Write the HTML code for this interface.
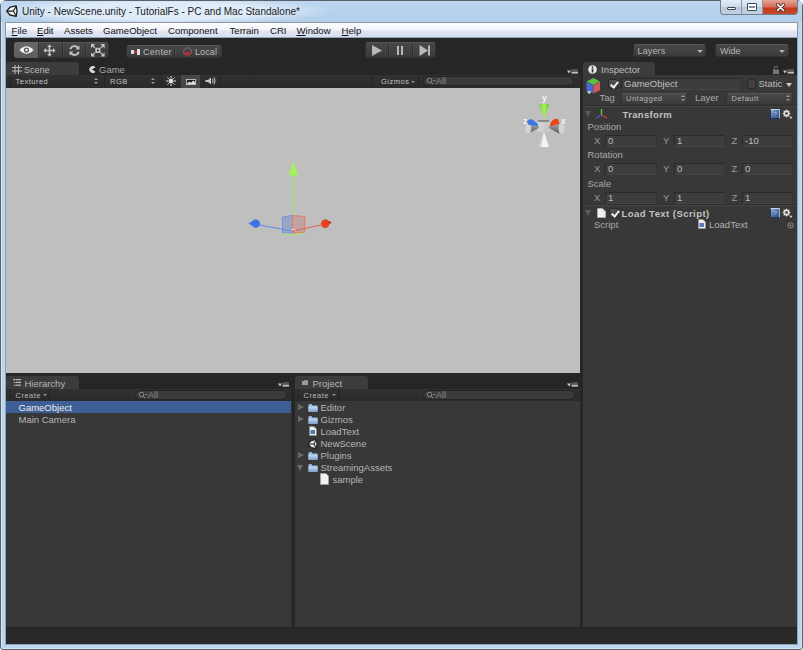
<!DOCTYPE html>
<html><head><meta charset="utf-8">
<style>
*{margin:0;padding:0;box-sizing:border-box}
html,body{width:803px;height:650px;overflow:hidden;background:#fff}
body{position:relative;font-family:"Liberation Sans",sans-serif;font-size:10px}
.a{position:absolute}
.t{position:absolute;white-space:pre;line-height:1}
/* window frame */
#frame{left:0;top:0;width:803px;height:650px;background:#bcd5ee;border:1px solid #59626c;border-radius:6px 6px 3px 3px;box-shadow:inset 1px 1px 0 #d6e6f5,inset -1px -1px 0 #d6e6f5}
#menubar{left:5px;top:22px;width:793px;height:16px;background:linear-gradient(#fdfdff,#f2f4fa 45%,#e0e4f3 55%,#d9def0);border:1px solid #8d97a6;border-bottom:none}
#app{left:6px;top:38px;width:791px;height:606px;background:#262626;box-shadow:0 0 0 1px #8ea4ba}
.tab{background:#3c3c3c;border-radius:3px 3px 0 0}
.tbar{background:#2e2e2e}
.btn{background:linear-gradient(#484848,#3b3b3b);border:1px solid #333;border-top-color:#565656;border-radius:3px}
.sep{position:absolute;top:0;width:1px;height:14px;background:#2e2e2e;box-shadow:1px 0 0 rgba(255,255,255,.05)}
.arr{position:absolute;width:0;height:0;border-left:3px solid transparent;border-right:3px solid transparent;border-top:3px solid #b0b0b0}
.ud{position:absolute;width:4px;height:7px;background:linear-gradient(#9a9a9a,#9a9a9a) top/4px 0 no-repeat}
.ud:before{content:"";position:absolute;left:0;top:0;border-left:2px solid transparent;border-right:2px solid transparent;border-bottom:2.5px solid #9c9c9c}
.ud:after{content:"";position:absolute;left:0;top:4px;border-left:2px solid transparent;border-right:2px solid transparent;border-top:2.5px solid #9c9c9c}
.chk{position:absolute;width:10px;height:10px;border-radius:2px;background:linear-gradient(#505050,#444);border:1px solid #2a2a2a}
.chk:after{content:"";position:absolute;left:2.6px;top:0px;width:2.8px;height:6px;border:solid #f0f0f0;border-width:0 2.1px 2.1px 0;transform:rotate(40deg)}
.fld{background:#3d3d3d;border:1px solid #2a2a2a;border-bottom-color:#454545;border-right-color:#353535;border-radius:1px}
.fo{position:absolute;border-left:3.5px solid transparent;border-right:3.5px solid transparent;border-top:6px solid #5c5c5c}
.hb{position:absolute;width:10px;height:10px;border-radius:1px;background:linear-gradient(135deg,#9db7da,#4d72a8 50%,#34568a);border:1px solid #1f3358;border-top-color:#c0d2ea;border-right-color:#9fb4d2}
.hb:after{content:"?";position:absolute;left:2.5px;top:1px;font:bold 6px "Liberation Sans",sans-serif;color:#9cb3d6}
.panel{background:#383838}
.lt{color:#c8c8c8}
</style></head><body>
<div id="frame" class="a"></div>
<div id="menubar" class="a"></div>
<div id="app" class="a"></div>
<!-- title -->
<div class="a" style="left:1px;top:1px;width:801px;height:21px;background:linear-gradient(#bdd5ee,#b3cfea)"></div>
<div class="a" style="left:0px;top:1px;width:330px;height:21px;background:radial-gradient(ellipse 175px 14px at 160px 10px,rgba(225,237,249,.95) 60%,rgba(225,237,249,0) 100%)"></div>
<svg class="a" style="left:5px;top:4px" width="14" height="14" viewBox="0 0 14 14"><path d="M1.6 7.1 L5 3.2 L11.2 1.8 L12 7.1 L11.2 12.4 L5 11 Z" fill="#f6f6f6" stroke="#1e1e1e" stroke-width="1.3" stroke-linejoin="round"/><path d="M2 7.1 H8.4 L11 2.4 M8.4 7.1 L11 11.8" stroke="#1e1e1e" stroke-width="1.1" fill="none"/></svg>
<div class="t" style="left:22px;top:7px;color:#1b1b1b;font-size:10px">Unity - NewScene.unity - TutorialFs - PC and Mac Standalone*</div>
<!-- window buttons -->
<div class="a" style="left:720px;top:0;width:78px;height:15px;border:1px solid #6d7f96;border-top:none;border-radius:0 0 4px 4px;overflow:hidden;background:linear-gradient(#e3ebf5,#d0dcea 45%,#b9c9dc 55%,#c3d2e3)">
 <div class="a" style="left:20px;top:0;width:1px;height:15px;background:#8596ad"></div>
 <div class="a" style="left:41px;top:0;width:1px;height:15px;background:#8596ad"></div>
 <div class="a" style="left:42px;top:0;width:35px;height:15px;background:linear-gradient(#e6a596,#d56c58 45%,#c4391f 55%,#c84a2a)"></div>
 <div class="a" style="left:6px;top:7px;width:9px;height:3px;background:#fff;border:1px solid #3c4452;border-radius:1px"></div>
 <div class="a" style="left:26px;top:3px;width:10px;height:8px;background:#fff;border:1px solid #3c4452;border-radius:1px"><div class="a" style="left:1px;top:2px;width:6px;height:2px;background:#8090a0"></div></div>
 <svg class="a" style="left:55px;top:3px" width="9" height="9" viewBox="0 0 9 9"><path d="M1.5 1.5 L7.5 7.5 M7.5 1.5 L1.5 7.5" stroke="#4a2e28" stroke-width="3.2" stroke-linecap="round"/><path d="M1.5 1.5 L7.5 7.5 M7.5 1.5 L1.5 7.5" stroke="#fff" stroke-width="1.7" stroke-linecap="round"/></svg>
</div>
<!-- menu -->
<div class="t" style="left:11.5px;top:25.5px;color:#111;font-size:9.6px"><u>F</u>ile</div>
<div class="t" style="left:37px;top:25.5px;color:#111;font-size:9.6px"><u>E</u>dit</div>
<div class="t" style="left:64px;top:25.5px;color:#111;font-size:9.6px">Assets</div>
<div class="t" style="left:103px;top:25.5px;color:#111;font-size:9.6px">GameObject</div>
<div class="t" style="left:168px;top:25.5px;color:#111;font-size:9.6px">Component</div>
<div class="t" style="left:229.5px;top:25.5px;color:#111;font-size:9.6px">Terrain</div>
<div class="t" style="left:270px;top:25.5px;color:#111;font-size:9.6px">CRI</div>
<div class="t" style="left:296.5px;top:25.5px;color:#111;font-size:9.6px"><u>W</u>indow</div>
<div class="t" style="left:341.5px;top:25.5px;color:#111;font-size:9.6px"><u>H</u>elp</div>



<!-- toolbar -->
<div class="a btn" style="left:14px;top:42px;width:95px;height:16px">
 <div class="a" style="left:-1px;top:-1px;width:24px;height:16px;background:linear-gradient(#6a6a6a,#5c5c5c);border-radius:3px 0 0 3px"></div>
 <div class="a sep" style="left:23px"></div><div class="a sep" style="left:47px"></div><div class="a sep" style="left:70px"></div>
 <svg class="a" style="left:3.5px;top:2px" width="15" height="10" viewBox="0 0 15 10"><path d="M0.5 5 Q7.5 -2.5 14.5 5 Q7.5 12.5 0.5 5Z" fill="#f2f2f2"/><circle cx="7.5" cy="5" r="2.6" fill="#555"/><circle cx="7.5" cy="5" r="1.3" fill="#eee"/></svg>
 <svg class="a" style="left:28px;top:1px" width="13" height="13" viewBox="0 0 13 13" fill="#c4c4c4"><path d="M6.5 0.5 L9 3 L7.3 3 L7.3 5.7 L10 5.7 L10 4 L12.5 6.5 L10 9 L10 7.3 L7.3 7.3 L7.3 10 L9 10 L6.5 12.5 L4 10 L5.7 10 L5.7 7.3 L3 7.3 L3 9 L0.5 6.5 L3 4 L3 5.7 L5.7 5.7 L5.7 3 L4 3 Z"/></svg>
 <svg class="a" style="left:53px;top:1px" width="13" height="13" viewBox="0 0 13 13" fill="none" stroke="#c4c4c4" stroke-width="1.8"><path d="M2.3 5.2 A4.3 4.3 0 0 1 10.2 4.2"/><path d="M10.7 7.8 A4.3 4.3 0 0 1 2.8 8.8"/><path d="M11.5 1.5 L11.5 5.5 L7.5 5.5 Z" fill="#c4c4c4" stroke="none"/><path d="M1.5 11.5 L1.5 7.5 L5.5 7.5 Z" fill="#c4c4c4" stroke="none"/></svg>
 <svg class="a" style="left:76px;top:1px" width="14" height="13" viewBox="0 0 14 13"><rect x="4.3" y="3.8" width="5.2" height="5.2" fill="#c4c4c4"/><rect x="6" y="5.5" width="1.8" height="1.8" fill="#333"/><g fill="#c4c4c4"><path d="M0 0H4.2L0 4.2Z"/><path d="M13.6 0H9.4L13.6 4.2Z"/><path d="M0 12.6H4.2L0 8.4Z"/><path d="M13.6 12.6H9.4L13.6 8.4Z"/></g><g stroke="#c4c4c4" stroke-width="1.3"><path d="M1 1L3.8 3.8M12.6 1L9.8 3.8M1 11.6L3.8 8.8M12.6 11.6L9.8 8.8"/></g></svg>
</div>
<div class="a btn" style="left:126px;top:45px;width:96px;height:13px">
 <div class="a sep" style="left:47px;height:11px"></div>
 <div class="a" style="left:4px;top:3.5px;width:3px;height:4px;background:#ddd"></div><div class="a" style="left:7px;top:4.5px;width:2.5px;height:2.5px;background:#e03030;border-radius:50%"></div><div class="a" style="left:9.5px;top:2.5px;width:3px;height:6px;background:#ddd"></div>
 <div class="t" style="left:16px;top:1.5px;color:#bdbdbd;font-size:9px;letter-spacing:0.3px">Center</div>
 <svg class="a" style="left:55.5px;top:1px" width="9" height="10" viewBox="0 0 10 11"><path d="M5 0.8 L9 3 L9 7.3 L5 9.5 L1 7.3 L1 3Z" fill="#3a3a3a" stroke="#8a8a8a" stroke-width="0.8"/><path d="M5 3.5 L5 8 M2 6.2 L5 9.3 L8 6.2" stroke="#b02a34" stroke-width="2" fill="none"/></svg>
 <div class="t" style="left:68px;top:1.5px;color:#bdbdbd;font-size:9px;letter-spacing:0.1px">Local</div>
</div>
<div class="a btn" style="left:365px;top:42px;width:71px;height:16px">
 <div class="a sep" style="left:22px"></div><div class="a sep" style="left:46px"></div>
 <svg class="a" style="left:5px;top:2px" width="12" height="11" viewBox="0 0 12 11"><path d="M1 0 L11 5.5 L1 11Z" fill="#b8b8b8"/></svg>
 <div class="a" style="left:31px;top:3px;width:2px;height:9px;background:#b8b8b8"></div><div class="a" style="left:35px;top:3px;width:2px;height:9px;background:#b8b8b8"></div>
 <svg class="a" style="left:53px;top:2px" width="12" height="11" viewBox="0 0 12 11"><path d="M0.5 0 L9 5.5 L0.5 11Z" fill="#b8b8b8"/><rect x="9" y="0.5" width="2" height="10" fill="#b8b8b8"/></svg>
</div>
<div class="a btn" style="left:633px;top:44px;width:73px;height:13px"><div class="t" style="left:3.5px;top:1.5px;color:#b4b4b4;font-size:9px;letter-spacing:0.15px">Layers</div><div class="arr" style="left:63px;top:5px"></div></div>
<div class="a btn" style="left:715px;top:44px;width:74px;height:13px"><div class="t" style="left:4px;top:1.5px;color:#b4b4b4;font-size:9px">Wide</div><div class="arr" style="left:63px;top:5px"></div></div>

<div class="a" style="left:6px;top:627px;width:791px;height:17px;background:#292929;border-top:1px solid #232323"></div>
<!-- scene -->
<div class="a tab" style="left:6px;top:62px;width:73px;height:14px"></div>
<svg class="a" style="left:12px;top:65px" width="10" height="9" viewBox="0 0 10 9" stroke="#bbb" stroke-width="1"><path d="M3 0V9M6.5 0V9M0 2.5H10M0 6H10"/></svg>
<div class="t lt" style="left:24px;top:65.5px;font-size:9px;color:#b9b9b9">Scene</div>
<svg class="a" style="left:88px;top:66px" width="8" height="7" viewBox="0 0 8 7"><path d="M7.5 1.2 A3.5 3.5 0 1 0 7.5 5.8 L4 3.5Z" fill="#d8d8d8"/></svg>
<div class="t" style="left:99px;top:64.5px;font-size:9.5px;color:#a8a8a8">Game</div>
<svg class="a" style="left:567px;top:69px" width="11" height="6" viewBox="0 0 11 6"><path d="M0 1.5H4L2 4.5Z" fill="#c4c4c4"/><rect x="4.5" y="0.6" width="6.5" height="0.9" fill="#888"/><rect x="4.5" y="2.6" width="6.5" height="2" fill="#bdbdbd"/></svg>
<div class="a tbar" style="left:6px;top:75px;width:574px;height:13px;background:linear-gradient(#313131,#2a2a2a)"></div>
<div class="a" style="left:10px;top:76px;width:1px;height:11px;background:#222"></div>
<div class="t" style="left:15.5px;top:78.3px;font-size:7.5px;color:#c4c4c4;letter-spacing:0.5px">Textured</div>
<div class="ud" style="left:94px;top:78px"></div>
<div class="a" style="left:104px;top:76px;width:1px;height:11px;background:#222"></div>
<div class="t" style="left:110px;top:78.3px;font-size:7.5px;color:#c4c4c4;letter-spacing:0.5px">RGB</div>
<div class="ud" style="left:151px;top:78px"></div>
<div class="a" style="left:161px;top:76px;width:1px;height:11px;background:#222"></div>
<svg class="a" style="left:166px;top:76px" width="10" height="10" viewBox="0 0 10 10" stroke="#e4e4e4" stroke-width="1"><circle cx="5" cy="5" r="2" fill="#e4e4e4"/><path d="M5 0V2M5 8V10M0 5H2M8 5H10M1.5 1.5L2.8 2.8M7.2 7.2L8.5 8.5M8.5 1.5L7.2 2.8M2.8 7.2L1.5 8.5"/></svg>
<div class="a" style="left:181px;top:75px;width:19px;height:13px;background:#474747"></div>
<svg class="a" style="left:186px;top:78.5px" width="10" height="6" viewBox="0 0 10 6"><rect x="0.4" y="0.4" width="9.2" height="5.2" fill="#1e1e1e" stroke="#d8d8d8" stroke-width="0.8"/><path d="M0.8 5.2 L3 2.5 L5 3.8 L7.3 1.6 L9.2 3.6 V5.2Z" fill="#e0e0e0"/></svg>
<svg class="a" style="left:205px;top:76px" width="11" height="10" viewBox="0 0 11 10"><path d="M0.5 4H3L6 1.5V8.5L3 6H0.5Z" fill="#c8c8c8"/><path d="M7.5 3Q8.5 5 7.5 7M9 1.5Q11 5 9 8.5" stroke="#c8c8c8" fill="none" stroke-width="1"/></svg>
<div class="a" style="left:219px;top:76px;width:1px;height:11px;background:#222"></div>
<div class="a" style="left:372px;top:76px;width:1px;height:11px;background:#222"></div>
<div class="t" style="left:381px;top:78.3px;font-size:7.5px;color:#c4c4c4;letter-spacing:0.5px">Gizmos</div>
<div class="arr" style="left:411px;top:80.5px;border-top-color:#999;border-width:2.5px 2.5px 0"></div>
<div class="a" style="left:418px;top:76px;width:1px;height:11px;background:#222"></div>
<div class="a" style="left:423px;top:76px;width:151px;height:10px;border-radius:5px;background:#3a3a3a;border:1px solid #242424"></div>
<svg class="a" style="left:426px;top:77px" width="10" height="8" viewBox="0 0 10 8" stroke="#888" fill="none"><circle cx="3.5" cy="3.5" r="2.3"/><path d="M5.2 5.2L7 7"/><path d="M7 3H10L8.5 4.5Z" fill="#888" stroke="none"/></svg>
<div class="t" style="left:436px;top:77px;font-size:9px;color:#8a8a8a">All</div>
<div class="a" style="left:6px;top:88px;width:574px;height:285px;background:#bfbfbf"></div>
<!-- handles -->
<svg class="a" style="left:240px;top:150px" width="100" height="90" viewBox="240 150 100 90">
 <path d="M292.7 175 V216" stroke="#9ee35f" stroke-width="1"/>
 <path d="M293.2 161 L298 175.5 L288.5 175.5Z" fill="#a6f25a"/>
 <path d="M282.5 217 L292.5 215.5 L292.5 233 L282.5 233Z" fill="#9aa7c4" stroke="#6f93e6" stroke-width="1"/>
 <path d="M292.5 215.5 L304.8 216.5 L304.8 232.5 L292.5 233Z" fill="#c3a3a0" stroke="#df7b6a" stroke-width="1"/>
 <path d="M283 233.5 L293 235 L305 233" stroke="#a8e86a" stroke-width="1.2" fill="none"/>
 <path d="M259 225 L292 231" stroke="#5b8bea" stroke-width="1"/>
 <path d="M321 225 L293 231" stroke="#e0604a" stroke-width="1"/>
 <path d="M248.5 223.4 L255 219.8 L255 227.3Z" fill="#3d70e6"/>
 <circle cx="255.8" cy="223.6" r="4.2" fill="#3e72ea"/>
 <path d="M331.8 222.6 L325 219 L325 226.5Z" fill="#8a2a18"/>
 <circle cx="325.2" cy="223.8" r="4.2" fill="#e8421c"/>
 <path d="M291.6 230.5 A2 2 0 0 1 295.4 230.5" fill="none" stroke="#f0f0f0" stroke-width="1"/>
</svg>
<!-- scene gizmo -->
<svg class="a" style="left:515px;top:92px" width="55" height="58" viewBox="515 92 55 58">
 <defs><linearGradient id="cg" x1="0" y1="0" x2="0" y2="1"><stop offset="0" stop-color="#a8a8a8"/><stop offset="1" stop-color="#5a5a5a"/></linearGradient>
 <linearGradient id="gg" x1="0" y1="0" x2="1" y2="0"><stop offset="0" stop-color="#6fcf2a"/><stop offset="0.5" stop-color="#a8f060"/><stop offset="1" stop-color="#62c21e"/></linearGradient></defs>
 <path d="M539 104.3 L549.3 104.3 L544.3 118.5Z" fill="url(#gg)"/>
 <path d="M544 132 L549 146.5 Q544 147.8 539 146.5Z" fill="#f4f4f4"/><path d="M544 132 L541.2 146.9 Q539.8 146.8 539 146.5Z" fill="#d0d0d0"/>
 <path d="M537.5 120.3 H549.5 V132 H537.5Z" fill="#d2d2d4"/>
 <path d="M543.5 120.3 H549.5 V132 H543.5Z" fill="#c8c8ca"/>
 <path d="M537.5 120.3 H549.5 L548.5 121.8 H538.5Z" fill="#707070"/>
 <path d="M528 123.3 L538.7 126.5 L538.7 128 L528 133.7Z" fill="url(#cg)"/>
 <ellipse cx="528.2" cy="128.5" rx="3" ry="5.2" fill="#d4d4d8"/>
 <path d="M527 121.6 Q529 118.3 532.5 119.6 L537.8 124 L538 126.3 L528.5 124.8Z" fill="#3d78e6"/>
 <path d="M559.5 123.3 L548.8 126.5 L548.8 128 L559.5 133.7Z" fill="url(#cg)"/>
 <ellipse cx="561.5" cy="128.5" rx="3" ry="5.2" fill="#d4d4d8"/>
 <path d="M550 125.8 L550.5 123 Q553.5 118 558 119 L559.6 123.6 L551 126.2Z" fill="#ec4419"/>
 <text x="544.3" y="100.8" font-family="Liberation Sans" font-weight="bold" font-size="8.5" fill="#f4f4f4" text-anchor="middle">y</text>
 <text x="525" y="123.8" font-family="Liberation Sans" font-weight="bold" font-size="8.5" fill="#f4f4f4" text-anchor="middle">z</text>
 <text x="563.3" y="123.8" font-family="Liberation Sans" font-weight="bold" font-size="8.5" fill="#f4f4f4" text-anchor="middle">x</text>
</svg>
<!-- inspector -->
<div class="a tab" style="left:583px;top:62px;width:72px;height:13px"></div>
<div class="a panel" style="left:583px;top:75px;width:214px;height:552px"></div>
<svg class="a" style="left:588px;top:65px" width="9" height="9" viewBox="0 0 9 9"><circle cx="4.5" cy="4.5" r="4.3" fill="#e8e8e8"/><rect x="3.7" y="3.5" width="1.7" height="4" fill="#333"/><circle cx="4.5" cy="2.2" r="0.9" fill="#333"/></svg>
<div class="t" style="left:601px;top:65px;font-size:9.5px;color:#bdbdbd">Inspector</div>
<svg class="a" style="left:773px;top:66px" width="6" height="8" viewBox="0 0 6 8"><path d="M1.2 3.5V2.2A1.8 1.8 0 0 1 4.8 2.2" stroke="#777" fill="none" stroke-width="1"/><rect x="0" y="3.5" width="6" height="4.5" fill="#777"/></svg>
<svg class="a" style="left:783px;top:69px" width="11" height="6" viewBox="0 0 11 6"><path d="M0 1.5H4L2 4.5Z" fill="#c4c4c4"/><rect x="4.5" y="0.6" width="6.5" height="0.9" fill="#888"/><rect x="4.5" y="2.6" width="6.5" height="2" fill="#bdbdbd"/></svg>
<!-- go header -->
<svg class="a" style="left:585px;top:77px" width="16" height="19" viewBox="0 0 16 19"><path d="M8.5 1L15 4.6L8.3 8.2L1.5 4.6Z" fill="#5cc043"/><path d="M1.5 4.6L8.3 8.2V16.5L1.5 13.3Z" fill="#4a68d6"/><path d="M15 4.6L8.3 8.2V16.5L15 13.3Z" fill="#cf5a5a"/><path d="M1.5 4.6L8.3 8.2L15 4.6M8.3 8.2V16.5" stroke="#2a3a2a" stroke-width="0.4" fill="none" opacity=".5"/><path d="M1.8 14.3L6.5 14.3L4.1 17.3Z" fill="#d8d8d8"/></svg>
<div class="a chk" style="left:608px;top:79px"></div>
<div class="a fld" style="left:621px;top:78px;width:121px;height:12px"></div>
<div class="t" style="left:624px;top:78.5px;font-size:9.5px;color:#c0c0c0">GameObject</div>
<div class="a" style="left:747px;top:79px;width:9px;height:10px;border-radius:2px;background:#404040;border:1px solid #2a2a2a"></div>
<div class="t" style="left:758.5px;top:78.5px;font-size:9.5px;color:#bdbdbd">Static</div>
<div class="arr" style="left:786px;top:83px;border-width:4px 3px 0;border-top-color:#c8c8c8"></div>
<div class="t" style="left:599.5px;top:92.5px;font-size:9.5px;color:#a9a9a9">Tag</div>
<div class="a btn" style="left:621px;top:93px;width:67px;height:12px;border-radius:3px"></div>
<div class="t" style="left:626px;top:94.8px;font-size:7.5px;color:#b4b4b4;letter-spacing:0.5px">Untagged</div>
<div class="ud" style="left:681px;top:95px"></div>
<div class="t" style="left:695px;top:92.5px;font-size:9.5px;color:#a9a9a9">Layer</div>
<div class="a btn" style="left:726px;top:93px;width:67px;height:12px;border-radius:3px"></div>
<div class="t" style="left:731.5px;top:94.8px;font-size:7.5px;color:#b4b4b4;letter-spacing:0.5px">Default</div>
<div class="ud" style="left:786px;top:95px"></div>
<div class="a" style="left:583px;top:105px;width:214px;height:1px;background:#2f2f2f"></div>
<div class="a" style="left:583px;top:106px;width:214px;height:1px;background:#454545"></div>
<!-- transform -->
<div class="fo" style="left:585px;top:111px"></div>
<svg class="a" style="left:595px;top:109px" width="13" height="10" viewBox="0 0 13 10"><path d="M6.5 0V6" stroke="#59c73a" stroke-width="1.4"/><path d="M6.5 6L1 9" stroke="#3c5ad8" stroke-width="1.4"/><path d="M6.5 6L12 9" stroke="#d83c3c" stroke-width="1.4"/></svg>
<div class="t" style="left:622.5px;top:109.5px;font-size:9.5px;color:#c2c2c2;font-weight:bold;letter-spacing:0.35px">Transform</div>
<div class="hb" style="left:770px;top:109px"></div>
<svg class="a" style="left:782px;top:108.5px" width="11" height="11" viewBox="0 0 11 11"><path d="M8.80 4.50 L7.18 5.61 L7.54 7.54 L5.61 7.18 L4.50 8.80 L3.39 7.18 L1.46 7.54 L1.82 5.61 L0.20 4.50 L1.82 3.39 L1.46 1.46 L3.39 1.82 L4.50 0.20 L5.61 1.82 L7.54 1.46 L7.18 3.39Z" fill="#dcdcdc"/><circle cx="4.5" cy="4.5" r="1.3" fill="#383838"/><path d="M7.3 7.8H10.5L8.9 10Z" fill="#dcdcdc"/></svg>
<div class="t" style="left:587.5px;top:121.5px;font-size:9.5px;color:#a9a9a9">Position</div>
<div class="t" style="left:587.5px;top:150px;font-size:9.5px;color:#a9a9a9">Rotation</div>
<div class="t" style="left:587.5px;top:178.5px;font-size:9.5px;color:#a9a9a9">Scale</div>
<div class="t" style="left:594px;top:135.5px;font-size:9.5px;color:#9a9a9a">X</div><div class="a fld" style="left:605px;top:135px;width:52px;height:12px"></div><div class="t" style="left:608px;top:135.5px;font-size:9.5px;color:#bdbdbd">0</div>
<div class="t" style="left:663px;top:135.5px;font-size:9.5px;color:#9a9a9a">Y</div><div class="a fld" style="left:674px;top:135px;width:51px;height:12px"></div><div class="t" style="left:677px;top:135.5px;font-size:9.5px;color:#bdbdbd">1</div>
<div class="t" style="left:731.5px;top:135.5px;font-size:9.5px;color:#9a9a9a">Z</div><div class="a fld" style="left:742px;top:135px;width:51px;height:12px"></div><div class="t" style="left:745px;top:135.5px;font-size:9.5px;color:#bdbdbd">-10</div>
<div class="t" style="left:594px;top:163.5px;font-size:9.5px;color:#9a9a9a">X</div><div class="a fld" style="left:605px;top:163px;width:52px;height:12px"></div><div class="t" style="left:608px;top:163.5px;font-size:9.5px;color:#bdbdbd">0</div>
<div class="t" style="left:663px;top:163.5px;font-size:9.5px;color:#9a9a9a">Y</div><div class="a fld" style="left:674px;top:163px;width:51px;height:12px"></div><div class="t" style="left:677px;top:163.5px;font-size:9.5px;color:#bdbdbd">0</div>
<div class="t" style="left:731.5px;top:163.5px;font-size:9.5px;color:#9a9a9a">Z</div><div class="a fld" style="left:742px;top:163px;width:51px;height:12px"></div><div class="t" style="left:745px;top:163.5px;font-size:9.5px;color:#bdbdbd">0</div>
<div class="t" style="left:594px;top:192.5px;font-size:9.5px;color:#9a9a9a">X</div><div class="a fld" style="left:605px;top:192px;width:52px;height:12px"></div><div class="t" style="left:608px;top:192.5px;font-size:9.5px;color:#bdbdbd">1</div>
<div class="t" style="left:663px;top:192.5px;font-size:9.5px;color:#9a9a9a">Y</div><div class="a fld" style="left:674px;top:192px;width:51px;height:12px"></div><div class="t" style="left:677px;top:192.5px;font-size:9.5px;color:#bdbdbd">1</div>
<div class="t" style="left:731.5px;top:192.5px;font-size:9.5px;color:#9a9a9a">Z</div><div class="a fld" style="left:742px;top:192px;width:51px;height:12px"></div><div class="t" style="left:745px;top:192.5px;font-size:9.5px;color:#bdbdbd">1</div>

<div class="a" style="left:583px;top:204px;width:214px;height:1px;background:#2f2f2f"></div>
<div class="a" style="left:583px;top:205px;width:214px;height:1px;background:#454545"></div>
<!-- load text -->
<div class="fo" style="left:585px;top:210px"></div>
<svg class="a" style="left:597px;top:208px" width="9" height="10" viewBox="0 0 9 10"><path d="M0.5 0.5H5.5L8.5 3.5V9.5H0.5Z" fill="#f0f0f0" stroke="#bbb" stroke-width="0.6"/><path d="M5.5 0.5V3.5H8.5" fill="#ccc"/></svg>
<div class="a chk" style="left:609px;top:208px"></div>
<div class="t" style="left:621.5px;top:209px;font-size:9.5px;color:#c2c2c2;font-weight:bold;letter-spacing:0.45px">Load Text (Script)</div>
<div class="hb" style="left:770px;top:208px"></div>
<svg class="a" style="left:782px;top:207.5px" width="11" height="11" viewBox="0 0 11 11"><path d="M8.80 4.50 L7.18 5.61 L7.54 7.54 L5.61 7.18 L4.50 8.80 L3.39 7.18 L1.46 7.54 L1.82 5.61 L0.20 4.50 L1.82 3.39 L1.46 1.46 L3.39 1.82 L4.50 0.20 L5.61 1.82 L7.54 1.46 L7.18 3.39Z" fill="#dcdcdc"/><circle cx="4.5" cy="4.5" r="1.3" fill="#383838"/><path d="M7.3 7.8H10.5L8.9 10Z" fill="#dcdcdc"/></svg>
<div class="t" style="left:594px;top:220px;font-size:9.5px;color:#a9a9a9">Script</div>
<svg class="a" style="left:698px;top:219px" width="8" height="10" viewBox="0 0 8 10"><path d="M0.5 0.5H5L7.5 3V9.5H0.5Z" fill="#eee" stroke="#999" stroke-width="0.6"/><rect x="1.5" y="4" width="4.5" height="4" fill="#5a7ab0"/></svg>
<div class="t" style="left:709px;top:220px;font-size:9.5px;color:#b3b3b3">LoadText</div>
<svg class="a" style="left:787px;top:222px" width="7" height="7" viewBox="0 0 7 7"><circle cx="3.5" cy="3.5" r="2.7" fill="none" stroke="#999" stroke-width="0.9"/><circle cx="3.5" cy="3.5" r="1" fill="#999"/></svg>
<!-- hierarchy -->
<div class="a tab" style="left:6px;top:376px;width:73px;height:13px"></div>
<svg class="a" style="left:13px;top:379px" width="8" height="7" viewBox="0 0 8 7" fill="#bbb"><rect x="0" y="0" width="2" height="1.2"/><rect x="2.5" y="0" width="5.5" height="1.2"/><rect x="1" y="2.8" width="1.5" height="1.2"/><rect x="3" y="2.8" width="5" height="1.2"/><rect x="1" y="5.6" width="1.5" height="1.2"/><rect x="3" y="5.6" width="5" height="1.2"/></svg>
<div class="t" style="left:24.5px;top:378.5px;font-size:9.5px;color:#b5b5b5">Hierarchy</div>
<svg class="a" style="left:278px;top:382px" width="11" height="6" viewBox="0 0 11 6"><path d="M0 1.5H4L2 4.5Z" fill="#c4c4c4"/><rect x="4.5" y="0.6" width="6.5" height="0.9" fill="#888"/><rect x="4.5" y="2.6" width="6.5" height="2" fill="#bdbdbd"/></svg>
<div class="a tbar" style="left:6px;top:389px;width:285px;height:12px;background:linear-gradient(#313131,#2a2a2a)"></div>
<div class="a" style="left:10px;top:389px;width:1px;height:11px;background:#222"></div>
<div class="a" style="left:49px;top:389px;width:1px;height:11px;background:#222"></div>
<div class="t" style="left:15.5px;top:392.3px;font-size:7.5px;color:#b8b8b8;letter-spacing:0.5px">Create</div>
<div class="arr" style="left:43px;top:394px;border-top-color:#999;border-width:2.5px 2.5px 0"></div>
<div class="a" style="left:135px;top:390px;width:152px;height:10px;border-radius:5px;background:#3a3a3a;border:1px solid #242424"></div>
<svg class="a" style="left:138px;top:391px" width="10" height="8" viewBox="0 0 10 8" stroke="#888" fill="none"><circle cx="3.5" cy="3.5" r="2.3"/><path d="M5.2 5.2L7 7"/><path d="M7 3H10L8.5 4.5Z" fill="#888" stroke="none"/></svg>
<div class="t" style="left:148px;top:390.5px;font-size:9px;color:#8a8a8a">All</div>
<div class="a panel" style="left:6px;top:401px;width:286px;height:226px;box-shadow:inset -1px 0 0 #303030"></div>
<div class="a" style="left:6px;top:401px;width:285px;height:12px;background:#3e5f96"></div>
<div class="t" style="left:18.5px;top:402.5px;font-size:9.5px;color:#ececec">GameObject</div>
<div class="t" style="left:18.5px;top:414.5px;font-size:9.5px;color:#b5b5b5">Main Camera</div>

<!-- project -->
<div class="a tab" style="left:295px;top:376px;width:73px;height:13px"></div>
<svg class="a" style="left:301px;top:379px" width="8" height="7" viewBox="0 0 8 7"><path d="M0.5 1.5H3L3.8 0.7H7.5V6.5H0.5Z" fill="#999" stroke="#222" stroke-width="0.6"/></svg>
<div class="t" style="left:312.5px;top:378.5px;font-size:9.5px;color:#b5b5b5">Project</div>
<svg class="a" style="left:567px;top:382px" width="11" height="6" viewBox="0 0 11 6"><path d="M0 1.5H4L2 4.5Z" fill="#c4c4c4"/><rect x="4.5" y="0.6" width="6.5" height="0.9" fill="#888"/><rect x="4.5" y="2.6" width="6.5" height="2" fill="#bdbdbd"/></svg>
<div class="a tbar" style="left:295px;top:389px;width:285px;height:12px;background:linear-gradient(#313131,#2a2a2a)"></div>
<div class="a" style="left:298px;top:389px;width:1px;height:11px;background:#222"></div>
<div class="a" style="left:338px;top:389px;width:1px;height:11px;background:#222"></div>
<div class="t" style="left:303.5px;top:392.3px;font-size:7.5px;color:#b8b8b8;letter-spacing:0.5px">Create</div>
<div class="arr" style="left:332px;top:394px;border-top-color:#999;border-width:2.5px 2.5px 0"></div>
<div class="a" style="left:423px;top:390px;width:152px;height:10px;border-radius:5px;background:#3a3a3a;border:1px solid #242424"></div>
<svg class="a" style="left:426px;top:391px" width="10" height="8" viewBox="0 0 10 8" stroke="#888" fill="none"><circle cx="3.5" cy="3.5" r="2.3"/><path d="M5.2 5.2L7 7"/><path d="M7 3H10L8.5 4.5Z" fill="#888" stroke="none"/></svg>
<div class="t" style="left:436px;top:390.5px;font-size:9px;color:#8a8a8a">All</div>
<div class="a panel" style="left:295px;top:401px;width:285px;height:226px"></div>
<div class="a" style="left:298px;top:404px;border-top:3.5px solid transparent;border-bottom:3.5px solid transparent;border-left:6px solid #6a6a6a"></div><svg class="a" style="left:307.5px;top:403px" width="10" height="9.5" viewBox="0 0 11 10"><path d="M0.5 2V9.5H10.5V2.5H5L4 1H1.2Z" fill="#8fb1d8"/><path d="M0.5 3.5H10.5V9.5H0.5Z" fill="url(#fg)"/></svg><div class="t" style="left:320.5px;top:403px;font-size:9.5px;color:#b5b5b5">Editor</div>
<div class="a" style="left:298px;top:416px;border-top:3.5px solid transparent;border-bottom:3.5px solid transparent;border-left:6px solid #6a6a6a"></div><svg class="a" style="left:307.5px;top:415px" width="10" height="9.5" viewBox="0 0 11 10"><path d="M0.5 2V9.5H10.5V2.5H5L4 1H1.2Z" fill="#8fb1d8"/><path d="M0.5 3.5H10.5V9.5H0.5Z" fill="url(#fg)"/></svg><div class="t" style="left:320.5px;top:415px;font-size:9.5px;color:#b5b5b5">Gizmos</div>
<svg class="a" style="left:309px;top:426px" width="8" height="10" viewBox="0 0 8 10"><path d="M0.5 0.5H5L7.5 3V9.5H0.5Z" fill="#eee" stroke="#888" stroke-width="0.6"/><rect x="1.5" y="4" width="4.5" height="4" fill="#5a7ab0"/></svg><div class="t" style="left:320.5px;top:427px;font-size:9.5px;color:#b5b5b5">LoadText</div>
<svg class="a" style="left:305.5px;top:437.5px" width="13.5" height="12" viewBox="0 0 14 14"><path d="M1.6 7.1 L5 3.2 L11.2 1.8 L12 7.1 L11.2 12.4 L5 11 Z" fill="#e6e6e6" stroke="#202020" stroke-width="1.3" stroke-linejoin="round"/><path d="M2 7.1 H8.4 L11 2.4 M8.4 7.1 L11 11.8" stroke="#202020" stroke-width="1.2" fill="none"/></svg><div class="t" style="left:320.5px;top:439px;font-size:9.5px;color:#b5b5b5">NewScene</div>
<div class="a" style="left:298px;top:452px;border-top:3.5px solid transparent;border-bottom:3.5px solid transparent;border-left:6px solid #6a6a6a"></div><svg class="a" style="left:307.5px;top:451px" width="10" height="9.5" viewBox="0 0 11 10"><path d="M0.5 2V9.5H10.5V2.5H5L4 1H1.2Z" fill="#8fb1d8"/><path d="M0.5 3.5H10.5V9.5H0.5Z" fill="url(#fg)"/></svg><div class="t" style="left:320.5px;top:451px;font-size:9.5px;color:#b5b5b5">Plugins</div>
<div class="a" style="left:297px;top:465px;border-left:3.5px solid transparent;border-right:3.5px solid transparent;border-top:6px solid #6a6a6a"></div><svg class="a" style="left:307.5px;top:463px" width="10" height="9.5" viewBox="0 0 11 10"><path d="M0.5 2V9.5H10.5V2.5H5L4 1H1.2Z" fill="#8fb1d8"/><path d="M0.5 3.5H10.5V9.5H0.5Z" fill="url(#fg)"/></svg><div class="t" style="left:320.5px;top:463px;font-size:9.5px;color:#b5b5b5">StreamingAssets</div>
<svg class="a" style="left:320px;top:473px" width="9" height="12" viewBox="0 0 9 12"><path d="M0.5 0.5H6L8.5 3V11.5H0.5Z" fill="#f2f2f2" stroke="#aaa" stroke-width="0.6"/></svg><div class="t" style="left:332.5px;top:475px;font-size:9.5px;color:#b5b5b5">sample</div>

<svg width="0" height="0" style="position:absolute"><defs><linearGradient id="fg" x1="0" y1="0" x2="0" y2="1"><stop offset="0" stop-color="#c9dcf2"/><stop offset="1" stop-color="#7ea3cf"/></linearGradient></defs></svg>
</body></html>
